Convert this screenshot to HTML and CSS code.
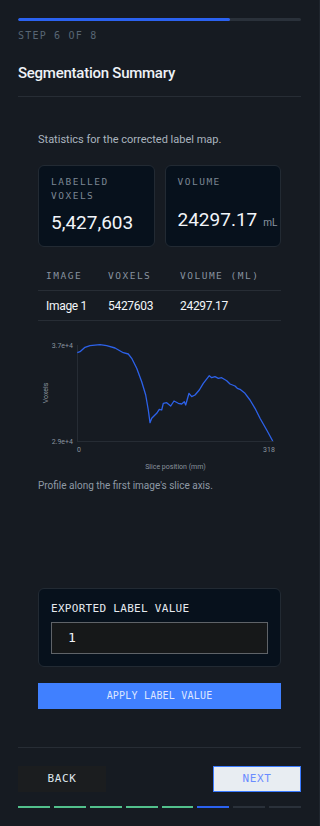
FILE: index.html
```html
<!DOCTYPE html>
<html lang="en">
<head>
<meta charset="utf-8">
<title>Segmentation Summary</title>
<link rel="stylesheet" href="styles.css">
</head>
<body>
<div class="page">
  <header class="top">
    <div class="progress"><div class="progress-fill" style="width:75%"></div></div>
    <div class="step">STEP 6 OF 8</div>
    <h1 class="title">Segmentation Summary</h1>
  </header>

  <main class="content">
    <p class="intro">Statistics for the corrected label map.</p>

    <div class="cards">
      <div class="card">
        <div class="card-label">LABELLED VOXELS</div>
        <div class="card-value">5,427,603</div>
      </div>
      <div class="card">
        <div class="card-label">VOLUME</div>
        <div class="card-value">24297.17<span class="unit">mL</span></div>
      </div>
    </div>

    <div class="table">
      <div class="row head"><span>IMAGE</span><span>VOXELS</span><span>VOLUME (ML)</span></div>
      <div class="row"><span>Image 1</span><span>5427603</span><span>24297.17</span></div>
    </div>

    <svg class="chart" viewBox="38 331 243 141" width="243" height="141">
      <line class="axis" x1="77.5" y1="345" x2="77.5" y2="441.5"/>
      <line class="axis" x1="77" y1="441.5" x2="274" y2="441.5"/>
      <text class="tick" x="73" y="347.5" text-anchor="end">3.7e+4</text>
      <text class="tick" x="73" y="443.5" text-anchor="end">2.9e+4</text>
      <text class="tick" x="79" y="452" text-anchor="middle">0</text>
      <text class="tick" x="269" y="452" text-anchor="middle">318</text>
      <text class="tick" x="175.5" y="469" text-anchor="middle">Slice position (mm)</text>
      <text class="tick" x="0" y="0" text-anchor="middle" transform="translate(47.5 393) rotate(-90)">Voxels</text>
      <path class="curve" d="M77.3,352.7 L80,351.7 L85,347.3 L90,345.7 L100,344.7 L106.7,345.7 L115,348 L123.3,352.7 L128.3,354 L131.7,358.3 L136.7,368.3 L141.7,381.7 L145.7,395 L148.3,410 L150,422.7 L151.7,418.3 L156.7,413.3 L159.3,409.3 L161.7,410 L163.3,403.3 L166.7,402.7 L170.7,406 L174,401 L178.3,403.3 L181.7,404 L184.3,401.7 L185.7,405 L189,393.3 L191.7,396.7 L195,395 L199.3,390 L203.3,383.3 L209.3,375.7 L211.7,377.7 L215,376.7 L218.3,378.3 L221.7,377.7 L226.7,380.7 L230,384 L235,386 L237.3,388.3 L240,389.3 L245,393.3 L250,400 L255,408.3 L260,418.3 L266.7,430 L272.7,441"/>
    </svg>

    <p class="caption">Profile along the first image's slice axis.</p>

    <div class="label-card">
      <div class="field-label">EXPORTED LABEL VALUE</div>
      <div class="input">1</div>
    </div>

    <button class="apply">APPLY LABEL VALUE</button>
  </main>

  <footer class="bottom">
    <div class="nav">
      <button class="back">BACK</button>
      <button class="next">NEXT</button>
    </div>
    <div class="steps">
      <span class="seg done"></span>
      <span class="seg done"></span>
      <span class="seg done"></span>
      <span class="seg done"></span>
      <span class="seg done"></span>
      <span class="seg current"></span>
      <span class="seg"></span>
      <span class="seg"></span>
    </div>
  </footer>
</div>
</body>
</html>
```

FILE: styles.css
```css
* { box-sizing: border-box; }

html, body {
  margin: 0;
  padding: 0;
  background: #161b22;
}

body {
  font-family: Roboto, "Noto Sans", sans-serif;
  color: #e8edf3;
}

.page {
  width: 320px;
  min-height: 826px;
  padding: 18px 18px 18px;
  border-right: 1px solid #1f252d;
}

.progress {
  height: 3px;
  background: #2a313a;
  border-radius: 2px;
  overflow: hidden;
}

.progress-fill {
  height: 100%;
  background: #2b62f0;
  border-radius: 2px;
}

.step {
  margin-top: 8.5px;
  font-family: "DejaVu Sans Mono", monospace;
  font-size: 10px;
  line-height: 12px;
  letter-spacing: 1.2px;
  color: #586674;
}

.top {
  border-bottom: 1px solid #272d35;
  padding-bottom: 13.2px;
}

.title {
  margin: 21.3px 0 0;
  font-size: 15px;
  line-height: 20px;
  font-weight: 500;
  color: #eef2f7;
  letter-spacing: -0.25px;
}

.content {
  padding: 34.6px 20px 38px;
}

.intro {
  margin: 0;
  font-size: 11px;
  line-height: 16px;
  color: #aab4bf;
}

.cards {
  margin-top: 17.4px;
  display: grid;
  grid-template-columns: repeat(2, minmax(0, 1fr));
  gap: 10px;
}

.card {
  display: flex;
  flex-direction: column;
  background: #07111c;
  border: 1px solid #222a33;
  border-radius: 6px;
  padding: 9px 12px 11.6px;
  min-height: 82.3px;
}

.card-label {
  font-family: "DejaVu Sans Mono", monospace;
  font-size: 9.5px;
  line-height: 14px;
  letter-spacing: 1.5px;
  color: #7b8693;
}

.card-value {
  margin-top: auto;
  font-size: 19px;
  line-height: 24px;
  color: #f2f5f9;
  white-space: nowrap;
}

.unit {
  margin-left: 6px;
  font-size: 10px;
  color: #8b96a3;
}

.table {
  margin-top: 15px;
}

.row {
  display: grid;
  grid-template-columns: 62px 72px 1fr;
  border-bottom: 1px solid #272d35;
  padding: 6.3px 0 6.7px;
  font-size: 12px;
  line-height: 16px;
  color: #f3f6fa;
  letter-spacing: -0.3px;
}

.row span {
  padding-left: 8px;
}

.row.head {
  padding: 7px 0;
  font-family: "DejaVu Sans Mono", monospace;
  font-size: 9.5px;
  line-height: 14px;
  letter-spacing: 1.5px;
  color: #87929f;
}

.chart {
  display: block;
  margin-top: 9.7px;
  overflow: visible;
}

.axis {
  stroke: #262c34;
  stroke-width: 1;
}

.tick {
  font-family: Roboto, "Noto Sans", sans-serif;
  font-size: 7px;
  fill: #8a949f;
}

.curve {
  fill: none;
  stroke: #2d62ea;
  stroke-width: 1.3;
  stroke-linejoin: round;
}

.caption {
  margin: 6.3px 0 0;
  font-size: 10px;
  line-height: 16px;
  color: #8e99a5;
}

.label-card {
  margin-top: 94px;
  background: #07111c;
  border: 1px solid #222a33;
  border-radius: 6px;
  padding: 13.2px 12px 12px;
}

.field-label {
  font-family: "DejaVu Sans Mono", monospace;
  font-size: 11px;
  line-height: 14px;
  letter-spacing: 0.3px;
  color: #e6eaf0;
}

.input {
  margin-top: 5.5px;
  height: 31.7px;
  background: #161819;
  border: 1px solid #5f6368;
  padding-left: 16px;
  font-family: "DejaVu Sans Mono", monospace;
  font-size: 13px;
  line-height: 29.7px;
  color: #eef1f5;
}

.apply {
  display: block;
  width: 100%;
  margin-top: 16.3px;
  height: 26px;
  border: 0;
  background: #4080ff;
  font-family: "DejaVu Sans Mono", monospace;
  font-size: 10px;
  letter-spacing: 0.2px;
  color: #dde6ff;
  padding: 0;
}

.bottom {
  border-top: 1px solid #272d35;
}

.nav {
  margin-top: 18px;
  display: flex;
  justify-content: space-between;
}

.nav button {
  width: 88px;
  height: 26px;
  padding: 0;
  font-family: "DejaVu Sans Mono", monospace;
  font-size: 11px;
  letter-spacing: 0.6px;
}

.back {
  background: #1b1d1f;
  border: 0;
  color: #dfe6ee;
}

.next {
  background: #e8edf2;
  border: 1.5px solid #3b7bff;
  color: #6a8cff;
}

.steps {
  margin-top: 14px;
  display: grid;
  grid-template-columns: repeat(8, 1fr);
  gap: 4px;
}

.seg {
  height: 2px;
  background: #2a313a;
}

.seg.done { background: #52c08c; }
.seg.current { background: #2b62f0; }
```
